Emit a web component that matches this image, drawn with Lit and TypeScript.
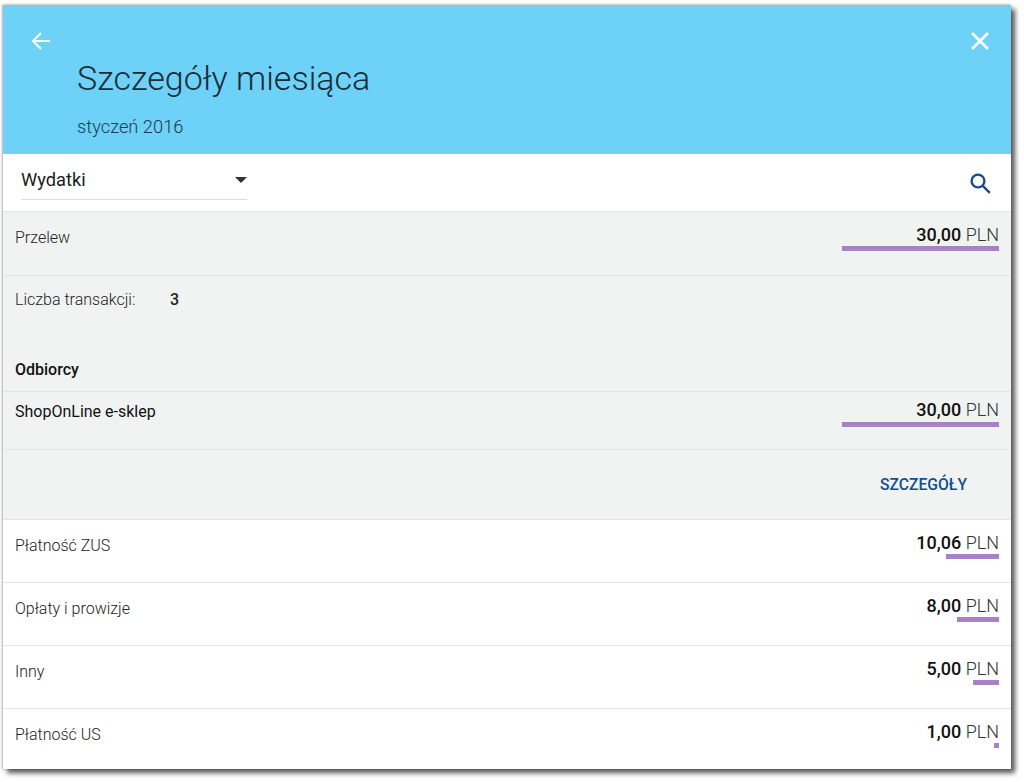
import { LitElement, html, css } from "lit";
import { customElement } from "lit/decorators.js";

const ROWS = [
  { label: "Płatność ZUS", amount: "10,06", width: 53 },
  { label: "Opłaty i prowizje", amount: "8,00", width: 42 },
  { label: "Inny", amount: "5,00", width: 26 },
  { label: "Płatność US", amount: "1,00", width: 5 },
];

@customElement("app-root")
export class AppRoot extends LitElement {
  static styles = css`
    :host { display: block; width: 1024px; height: 782px; background: #fff; font-family: Roboto, "Liberation Sans", sans-serif; color: #222; overflow: hidden; }
    .page { padding: 5px 0 0 3px; }
    .panel { width: 1008px; background: #fff; box-shadow: 4px 4px 5px #555, -1px 0 2px #bbb, 0 -1px 2px #ddd; }
    .head { height: 149px; background: #6dd1f8; display: flex; flex-direction: column; padding: 0 21px 0 28px; box-sizing: border-box; }
    .icons { display: flex; justify-content: space-between; padding-top: 26px; height: 20px; }
    .icons svg { display: block; width: 20px; height: 20px; }
    .title { font-weight: 300; font-size: 34px; line-height: 40px; margin: 7px 0 0 46px; color: #1b2c36; }
    .sub { font-weight: 300; font-size: 18.3px; line-height: 22px; margin: 18px 0 0 46px; color: #1f3a48; }
    .bar { height: 58px; display: flex; justify-content: space-between; box-sizing: border-box; padding: 0 19px 0 18px; border-bottom: 1px solid #e3e3e3; }
    .select { width: 226px; height: 46px; box-sizing: border-box; border-bottom: 1px solid #ddd; display: flex; align-items: center; justify-content: space-between; padding-top: 6px; font-size: 18.3px; color: #1c1c1c; }
    .caret { width: 0; height: 0; border-left: 6px solid transparent; border-right: 6px solid transparent; border-top: 6px solid #333; margin-top: 1px; }
    .search { width: 24px; height: 24px; margin-top: 17px; }
    .row { height: 63px; display: flex; justify-content: space-between; box-sizing: border-box; padding: 0 12px; border-bottom: 1px solid #e3e3e3; }
    .row:last-child { height: 60px; border-bottom: none; }
    .grey { background: #f1f3f3; }
    .first { height: 64px; }
    .shop { height: 58px; }
    .label { font-weight: 300; font-size: 16px; line-height: 20px; padding-top: 16px; color: #222; }
    .strong { font-weight: 400; color: #111; padding-top: 10px; }
    .amt { display: flex; flex-direction: column; align-items: flex-end; padding-top: 12px; }
    .tight { padding-top: 7px; gap: 1px; }
    .value { font-size: 18px; line-height: 21px; font-weight: 300; color: #333; }
    .value b { font-weight: 500; color: #111; }
    .meter { height: 5px; background: #a981c7; margin-top: 1px; }
    .detail { height: 116px; padding: 0 12px; box-sizing: border-box; background: #f1f3f3; border-bottom: 1px solid #e3e3e3; }
    .count { display: flex; font-weight: 300; font-size: 16px; line-height: 20px; padding-top: 14px; }
    .count span { width: 155px; }
    .count b { font-weight: 500; }
    .rec { font-size: 16px; font-weight: 500; line-height: 20px; margin-top: 50px; color: #111; }
    .action { height: 70px; background: #f1f3f3; border-bottom: 1px solid #e3e3e3; display: flex; justify-content: flex-end; align-items: center; padding: 0 44px 0 0; box-sizing: border-box; font-size: 15.7px; font-weight: 500; color: #134f8c; }
  `;

  render() {
    return html`<div class="page"><div class="panel">
      <div class="head">
        <div class="icons">
          <svg viewBox="0 0 20 20" fill="none" stroke="#fff" stroke-width="2"><path d="M19 10H2M10 2l-8 8 8 8"/></svg>
          <svg viewBox="0 0 20 20" fill="none" stroke="#fff" stroke-width="2.6"><path d="M2 2l16 16M18 2L2 18"/></svg>
        </div>
        <div class="title">Szczegóły miesiąca</div>
        <div class="sub">styczeń 2016</div>
      </div>
      <div class="bar">
        <div class="select">Wydatki<span class="caret"></span></div>
        <svg class="search" viewBox="0 0 24 24" fill="none" stroke="#17498c" stroke-width="2.4"><circle cx="10" cy="10" r="6.4"/><path d="M14.8 14.8l7 7"/></svg>
      </div>
      <div class="row grey first">
        <div class="label">Przelew</div>
        <div class="amt"><div class="value"><b>30,00</b> PLN</div><div class="meter" style="width:157px"></div></div>
      </div>
      <div class="detail">
        <div class="count"><span>Liczba transakcji:</span><b>3</b></div>
        <div class="rec">Odbiorcy</div>
      </div>
      <div class="row grey shop">
        <div class="label strong">ShopOnLine e-sklep</div>
        <div class="amt tight"><div class="value"><b>30,00</b> PLN</div><div class="meter" style="width:157px"></div></div>
      </div>
      <div class="action">SZCZEGÓŁY</div>
      ${ROWS.map(r => html`<div class="row">
        <div class="label">${r.label}</div>
        <div class="amt"><div class="value"><b>${r.amount}</b> PLN</div><div class="meter" style="width:${r.width}px"></div></div>
      </div>`)}
    </div></div>`;
  }
}
